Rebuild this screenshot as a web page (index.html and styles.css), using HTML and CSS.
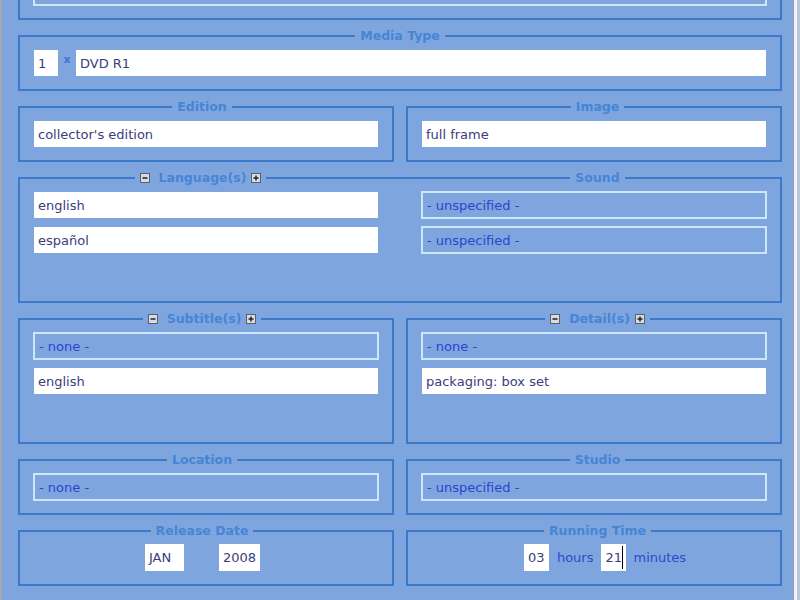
FILE: index.html
```html
<!DOCTYPE html>
<html lang="en">

<head>
    <meta charset="utf8">
    <title>Edit item</title>
    <link rel="stylesheet" href="styles.css">
</head>

<body>
    <div class="window">
        <div class="form">

            <!-- scrolled out of view, only its bottom shows -->
            <fieldset class="box wide">
                <legend><span class="head"></span></legend>
                <div class="body">
                    <div class="field nil"></div>
                </div>
            </fieldset>

            <fieldset class="box wide">
                <legend><span class="head"><span class="lab">Media Type</span></span></legend>
                <div class="body media">
                    <div class="field val qty">1</div>
                    <span class="times">x</span>
                    <div class="field val grow">DVD R1</div>
                </div>
            </fieldset>

            <fieldset class="box l">
                <legend><span class="head"><span class="lab">Edition</span></span></legend>
                <div class="body">
                    <div class="field val">collector's edition</div>
                </div>
            </fieldset>

            <fieldset class="box r">
                <legend><span class="head"><span class="lab">Image</span></span></legend>
                <div class="body">
                    <div class="field val">full frame</div>
                </div>
            </fieldset>

            <fieldset class="box wide split">
                <legend>
                    <span class="head l">
                        <svg class="tog" viewBox="0 0 10 10"><rect x=".5" y=".5" width="9" height="9"/><path d="M2.5 5h5"/></svg>
                        <span class="lab">Language(s)</span>
                        <svg class="tog" viewBox="0 0 10 10"><rect x=".5" y=".5" width="9" height="9"/><path d="M2.5 5h5M5 2.5v5"/></svg>
                    </span>
                    <span class="head r"><span class="lab">Sound</span></span>
                </legend>
                <div class="body cols">
                    <div class="stack">
                        <div class="field val">english</div>
                        <div class="field val">español</div>
                    </div>
                    <div class="stack">
                        <div class="field nil">- unspecified -</div>
                        <div class="field nil">- unspecified -</div>
                    </div>
                </div>
            </fieldset>

            <fieldset class="box l">
                <legend>
                    <span class="head">
                        <svg class="tog" viewBox="0 0 10 10"><rect x=".5" y=".5" width="9" height="9"/><path d="M2.5 5h5"/></svg>
                        <span class="lab">Subtitle(s)</span>
                        <svg class="tog" viewBox="0 0 10 10"><rect x=".5" y=".5" width="9" height="9"/><path d="M2.5 5h5M5 2.5v5"/></svg>
                    </span>
                </legend>
                <div class="body stack">
                    <div class="field nil">- none -</div>
                    <div class="field val">english</div>
                </div>
            </fieldset>

            <fieldset class="box r">
                <legend>
                    <span class="head">
                        <svg class="tog" viewBox="0 0 10 10"><rect x=".5" y=".5" width="9" height="9"/><path d="M2.5 5h5"/></svg>
                        <span class="lab">Detail(s)</span>
                        <svg class="tog" viewBox="0 0 10 10"><rect x=".5" y=".5" width="9" height="9"/><path d="M2.5 5h5M5 2.5v5"/></svg>
                    </span>
                </legend>
                <div class="body stack">
                    <div class="field nil">- none -</div>
                    <div class="field val">packaging: box set</div>
                </div>
            </fieldset>

            <fieldset class="box l">
                <legend><span class="head"><span class="lab">Location</span></span></legend>
                <div class="body">
                    <div class="field nil">- none -</div>
                </div>
            </fieldset>

            <fieldset class="box r">
                <legend><span class="head"><span class="lab">Studio</span></span></legend>
                <div class="body">
                    <div class="field nil">- unspecified -</div>
                </div>
            </fieldset>

            <fieldset class="box l">
                <legend><span class="head"><span class="lab">Release Date</span></span></legend>
                <div class="body">
                    <div class="when">
                        <div class="wbox mon">JAN</div>
                        <div class="wbox yr">2008</div>
                    </div>
                </div>
            </fieldset>

            <fieldset class="box r">
                <legend><span class="head"><span class="lab">Running Time</span></span></legend>
                <div class="body">
                    <div class="dur">
                        <div class="wbox num">03</div>
                        <span class="unit">hours</span>
                        <div class="wbox num">21<span class="caret"></span></div>
                        <span class="unit mins">minutes</span>
                    </div>
                </div>
            </fieldset>

        </div>
    </div>
</body>

</html>
```

FILE: styles.css
```css
* {
    box-sizing: border-box;
}

html {
    background-color: #b9c6dc;
}

body {
    margin: 0;
    font-family: "DejaVu Sans", sans-serif;
    font-size: 13px;
}

.window {
    width: 797px;
    height: 600px;
    overflow: hidden;
    background-color: #7fa5de;
    border-left: 2px solid #a3a9b3;
    border-right: 3px solid #f1f4f9;
    box-shadow: inset -1px 0 #909cae;
}

.form {
    display: grid;
    grid-template-columns: 376px 376px;
    column-gap: 12px;
    row-gap: 8px;
    padding-left: 16px;
    margin-top: -43px;
}

.wide {
    grid-column: 1 / -1;
}

/* group boxes */
.box {
    margin: 0;
    padding: 0;
    min-width: 0;
    border: 2px solid #3b79cb;
}

.box > legend {
    padding: 0;
    width: 100%;
    height: 16px;
    display: flex;
}

.head {
    flex: 1;
    display: flex;
    align-items: center;
    gap: 5px;
}

.head::before,
.head::after {
    content: "";
    flex: 1 1 0;
    height: 2px;
    background-color: #3b79cb;
}

.box.l .head::after {
    flex-basis: 8px;
}

.box.r .head::before {
    flex-basis: 7px;
}

.split .head.l::after {
    flex-basis: 19px;
}

.split .head.r::before {
    flex-basis: 15px;
}

.lab {
    color: #4585d6;
    font-weight: bold;
    font-size: 12.5px;
    line-height: 16px;
    white-space: nowrap;
}

.tog {
    width: 10px;
    height: 10px;
    flex: none;
}

.tog rect {
    fill: #d7dbe2;
    stroke: #5a5f6b;
}

.tog path {
    stroke: #1e2230;
    stroke-width: 1.5;
}

.head > .tog:nth-of-type(1) {
    margin-right: 4px;
}

.body {
    padding: 5px 13px 12px;
}

.stack {
    display: flex;
    flex-direction: column;
    gap: 7px;
    min-height: 115px;
}

.body.cols {
    display: grid;
    grid-template-columns: 346px 346px;
    column-gap: 42px;
}

.body.cols .stack {
    min-height: 98px;
}

/* inputs */
.field {
    height: 28px;
    display: flex;
    align-items: center;
    padding: 0 4px;
    white-space: nowrap;
    overflow: hidden;
}

.field.val {
    border: 1px solid transparent;
    background-color: #fff;
    background-clip: padding-box;
    color: #3b3d7c;
}

.field.nil {
    border: 2px solid #cde6fb;
    color: #2d43cf;
}

.media {
    display: flex;
    align-items: flex-start;
}

.media .qty {
    width: 26px;
    flex: none;
}

.media .grow {
    flex: 1;
}

.times {
    width: 16px;
    flex: none;
    text-align: center;
    font-size: 11px;
    font-weight: bold;
    line-height: 13px;
    margin-top: 4px;
    color: #3e72d6;
}

.when,
.dur {
    display: flex;
    justify-content: center;
    align-items: flex-start;
    height: 28px;
}

.when {
    gap: 35px;
    padding-right: 7px;
}

.dur {
    gap: 8px;
    padding-left: 22px;
}

.wbox {
    height: 27px;
    display: flex;
    align-items: center;
    padding: 0 4px;
    background-color: #fff;
    color: #3b3d7c;
}

.wbox.mon {
    width: 39px;
}

.wbox.yr {
    width: 41px;
}

.wbox.num {
    width: 25px;
}

.caret {
    width: 2px;
    height: 23px;
    background-color: #000;
}

.unit {
    line-height: 27px;
    color: #3048cf;
}

.unit.mins {
    margin-left: -1px;
}
```
